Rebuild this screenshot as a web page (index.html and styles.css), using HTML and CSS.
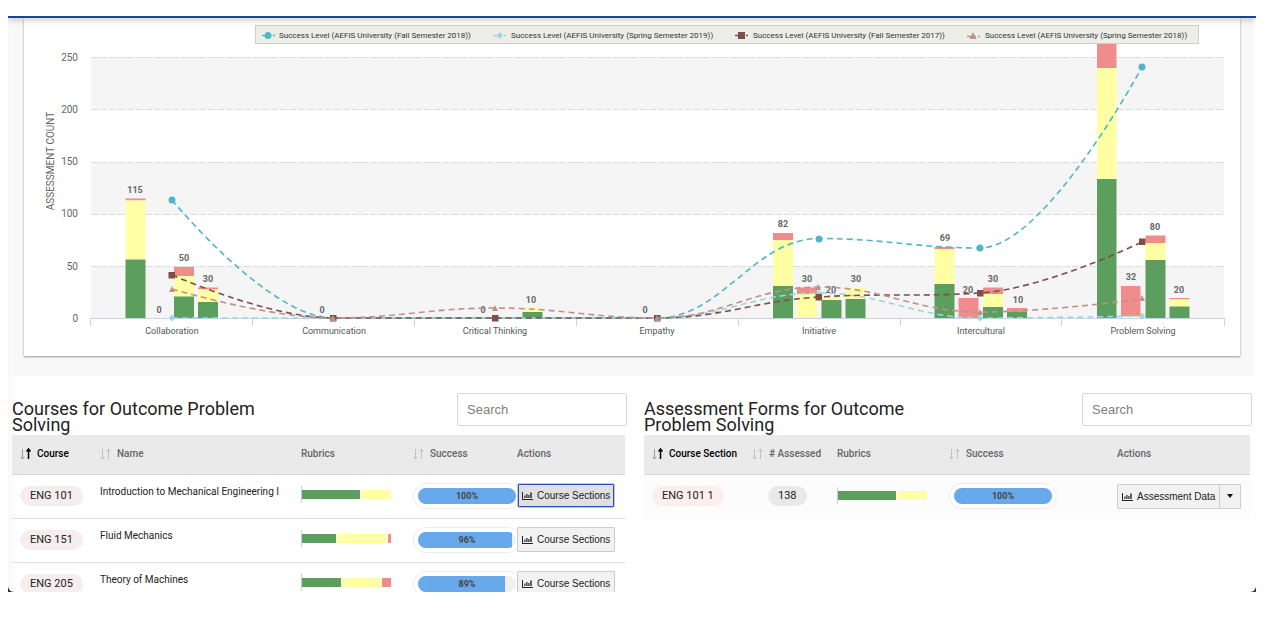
FILE: index.html
```html
<!DOCTYPE html>
<html lang="en">
<head>
    <meta charset="UTF-8">
    <meta name="viewport" content="width=device-width, initial-scale=1.0">
    <title>Outcome Assessment</title>
    <link rel="stylesheet" href="styles.css">
</head>
<body>
    <!-- shared icons -->
    <svg class="icon-defs" aria-hidden="true">
        <symbol id="icon-sort" viewBox="0 0 12 12">
            <path class="arrow-down" d="M2.500 1v10M0.500 9l2 2 2-2"/>
            <path class="arrow-up" d="M8.500 11V1M6.500 3.500l2-2.500 2 2.500"/>
        </symbol>
        <symbol id="icon-chart" viewBox="0 0 11 9">
            <path d="M0 1h1v7h10v1H0zM2.300 4.500h1.200v2.500H2.300zM4.300 3h1.200v4H4.300zM6.300 4h1.200v3H6.300zM8.300 1.500h1.400v5.500H8.300z"/>
        </symbol>
    </svg>

    <div class="frame">
        <div class="top-line"></div>
        <main class="content">
            <section class="chart-panel">
                <div class="chart-card">
                    <svg class="chart" viewBox="24 18 1216 338" role="img" aria-label="Assessment count by outcome">
                        <g class="bands">
                            <rect x="91" y="57" width="1133" height="52"/>
                            <rect x="91" y="162" width="1133" height="52"/>
                            <rect x="91" y="266" width="1133" height="52"/>
                        </g>
                        <path class="grid" d="M91 57.500H1224M91 109.500H1224M91 162.500H1224M91 214.500H1224M91 266.500H1224"/>

                        <g class="y-labels">
                            <text x="78" y="61">250</text>
                            <text x="78" y="113">200</text>
                            <text x="78" y="165">150</text>
                            <text x="78" y="217">100</text>
                            <text x="78" y="270">50</text>
                            <text x="78" y="322">0</text>
                        </g>
                        <text class="axis-title" transform="translate(54 161) rotate(-90)">ASSESSMENT COUNT</text>

                        <path class="axis" d="M91 318.500H1224M90.500 318v8M252.500 318v8M414.500 318v8M576.500 318v8M738.500 318v8M900.500 318v8M1061.500 318v8M1224.500 318v8"/>
                        <g class="x-labels">
                            <text x="172" y="334">Collaboration</text>
                            <text x="334" y="334">Communication</text>
                            <text x="495" y="334">Critical Thinking</text>
                            <text x="657" y="334">Empathy</text>
                            <text x="819" y="334">Initiative</text>
                            <text x="981" y="334">Intercultural</text>
                            <text x="1143" y="334">Problem Solving</text>
                        </g>

                        <!-- stacked bars -->
                        <path class="bar-red" d="M125.500 198.500h20v2h-20zM174 267h20v9h-20zM198 287.500h20v2h-20zM773 233h20v7h-20zM797 287.500h20v6.500h-20zM934.500 247h20v2h-20zM958.500 298h20v20h-20zM983 287.500h20v6.500h-20zM1007 308h20v4h-20zM1097 40h19.500v28h-19.500zM1121 286h19.500v30.500h-19.500zM1145.500 235.500h20v7.500h-20zM1169.500 298h20v1.500h-20z"/>
                        <path class="bar-yellow" d="M125.500 200.500h20v59h-20zM174 276h20v20.500h-20zM198 289.500h20v12.500h-20zM522.500 308h20v4h-20zM773 240h20v46h-20zM797 294h20v24h-20zM821.500 298h20v2h-20zM845.500 288h20v11h-20zM934.500 249h20v35h-20zM983 294h20v13h-20zM1097 68h19.500v111h-19.500zM1121 316.500h19.500v1.500h-19.500zM1145.500 243h20v17h-20zM1169.500 299.500h20v7h-20z"/>
                        <path class="bar-green" d="M125.500 259.500h20v58.500h-20zM174 296.500h20v21.500h-20zM198 302h20v16h-20zM522.500 312h20v6h-20zM773 286h20v32h-20zM821.500 300h20v18h-20zM845.500 299h20v19h-20zM934.500 284h20v34h-20zM983 307h20v11h-20zM1007 312h20v6h-20zM1097 179h19.500v139h-19.500zM1145.500 260h20v58h-20zM1169.500 306.500h20v11.500h-20z"/>

                        <g class="bar-labels">
                            <text x="135" y="193">115</text>
                            <text x="159" y="313">0</text>
                            <text x="184" y="261">50</text>
                            <text x="208" y="282">30</text>
                            <text x="322" y="313">0</text>
                            <text x="483" y="313">0</text>
                            <text x="531" y="303">10</text>
                            <text x="645" y="313">0</text>
                            <text x="783" y="227">82</text>
                            <text x="807" y="282">30</text>
                            <text x="831" y="293">20</text>
                            <text x="856" y="282">30</text>
                            <text x="945" y="241">69</text>
                            <text x="968" y="293">20</text>
                            <text x="993" y="282">30</text>
                            <text x="1018" y="303">10</text>
                            <text x="1131" y="280">32</text>
                            <text x="1155" y="230">80</text>
                            <text x="1179" y="293">20</text>
                        </g>

                        <!-- success level lines -->
                        <g class="line fall-2018">
                            <path d="M172 200C172 200 269 318 333 318C398 318 431 318 495 318C560 318 592 318 657 318C722 318 754 238.500 819 238.500C883 238.500 916 248 980 248C1045 248 1142 67 1142 67"/>
                            <circle cx="172" cy="200" r="3.500"/><circle cx="819" cy="239" r="3.500"/><circle cx="980" cy="248" r="3.500"/><circle cx="1142" cy="67" r="3.500"/>
                        </g>
                        <g class="line spring-2019">
                            <path d="M172 318H657C722 318 754 293 819 293C883 293 916 318 980 318C1045 318 1142 316 1142 316"/>
                            <path class="mark" d="M172 314.500l3 3.500-3 3.500-3-3.500zM819 290l3 3.500-3 3.500-3-3.500zM980 314.500l3 3.500-3 3.500-3-3.500zM1142 312.500l3 3.500-3 3.500-3-3.500z"/>
                        </g>
                        <g class="line fall-2017">
                            <path d="M172 275C172 275 269 318 333 318H657C722 318 754 301 819 297C883 293 916 297 980 293C1045 289 1142 242 1142 242"/>
                            <path class="mark" d="M168.500 272h6.500v6.500h-6.500zM330 315h6.500v6.500H330zM492 315h6.500v6.500H492zM654 315h6.500v6.500H654zM815.500 294h6.500v6.500h-6.500zM977 290h6.500v6.500H977zM1139 238.500h6.500v6.500h-6.500z"/>
                        </g>
                        <g class="line spring-2018">
                            <path d="M172 289C172 289 269 318 333 318C398 318 431 308 495 308C560 308 592 318 657 318C722 318 754 287 819 287C883 287 916 312 980 312C1045 312 1142 299 1142 299"/>
                            <path class="mark" d="M172 286l3 6h-6zM333 315l3 6h-6zM495 305l3 6h-6zM657 315l3 6h-6zM818 284l3 6h-6zM980 309l3 6h-6zM1142 295l3 6h-6z"/>
                        </g>

                        <!-- legend -->
                        <rect class="legend-box" x="255.500" y="25.500" width="943" height="18"/>
                        <g class="legend-marks">
                            <g class="line fall-2018"><path d="M262 35.500h13"/><circle cx="268" cy="35.500" r="3.500"/></g>
                            <g class="line spring-2019"><path d="M493 35.500h13"/><path class="mark" d="M500 32l3 3.500-3 3.500-3-3.500z"/></g>
                            <g class="line fall-2017"><path d="M735 35.500h13"/><path class="mark" d="M738 32h7v7h-7z"/></g>
                            <g class="line spring-2018"><path d="M967 36.500h13"/><path class="mark" d="M973 32l3.500 7h-7z"/></g>
                        </g>
                        <g class="legend-text">
                            <text x="279" y="38">Success Level (AEFIS University (Fall Semester 2018))</text>
                            <text x="511" y="38">Success Level (AEFIS University (Spring Semester 2019))</text>
                            <text x="753" y="38">Success Level (AEFIS University (Fall Semester 2017))</text>
                            <text x="985" y="38">Success Level (AEFIS University (Spring Semester 2018))</text>
                        </g>
                    </svg>
                </div>
            </section>

            <div class="tables">
                <section class="table-panel">
                    <div class="panel-head">
                        <h2>Courses for Outcome Problem Solving</h2>
                        <input type="search" class="search" placeholder="Search" aria-label="Search courses">
                    </div>
                    <table class="courses">
                        <thead>
                            <tr>
                                <th class="col-course sorted"><svg class="sort"><use href="#icon-sort"/></svg>Course</th>
                                <th><svg class="sort"><use href="#icon-sort"/></svg>Name</th>
                                <th class="col-rubrics">Rubrics</th>
                                <th class="col-success"><svg class="sort"><use href="#icon-sort"/></svg>Success</th>
                                <th class="col-actions">Actions</th>
                            </tr>
                        </thead>
                        <tbody>
                            <tr>
                                <td><span class="tag">ENG 101</span></td>
                                <td class="name">Introduction to Mechanical Engineering I</td>
                                <td><div class="rubric"><i class="green" style="width: 66%"></i><i class="yellow" style="width: 34%"></i></div></td>
                                <td><div class="progress"><div class="track"><div class="fill" style="width: 100%"></div><span>100%</span></div></div></td>
                                <td><button type="button" class="btn active"><svg class="icon"><use href="#icon-chart"/></svg>Course Sections</button></td>
                            </tr>
                            <tr>
                                <td><span class="tag">ENG 151</span></td>
                                <td class="name">Fluid Mechanics</td>
                                <td><div class="rubric"><i class="green" style="width: 39%"></i><i class="yellow" style="width: 57%"></i><i class="red" style="width: 4%"></i></div></td>
                                <td><div class="progress"><div class="track"><div class="fill" style="width: 96%"></div><span>96%</span></div></div></td>
                                <td><button type="button" class="btn"><svg class="icon"><use href="#icon-chart"/></svg>Course Sections</button></td>
                            </tr>
                            <tr>
                                <td><span class="tag">ENG 205</span></td>
                                <td class="name">Theory of Machines</td>
                                <td><div class="rubric"><i class="green" style="width: 44%"></i><i class="yellow" style="width: 45%"></i><i class="red" style="width: 11%"></i></div></td>
                                <td><div class="progress"><div class="track"><div class="fill" style="width: 89%"></div><span>89%</span></div></div></td>
                                <td><button type="button" class="btn"><svg class="icon"><use href="#icon-chart"/></svg>Course Sections</button></td>
                            </tr>
                        </tbody>
                    </table>
                </section>

                <section class="table-panel">
                    <div class="panel-head">
                        <h2>Assessment Forms for Outcome Problem Solving</h2>
                        <input type="search" class="search" placeholder="Search" aria-label="Search assessment forms">
                    </div>
                    <table class="forms">
                        <thead>
                            <tr>
                                <th class="col-section sorted"><svg class="sort"><use href="#icon-sort"/></svg>Course Section</th>
                                <th class="col-assessed"><svg class="sort"><use href="#icon-sort"/></svg># Assessed</th>
                                <th class="col-rubrics">Rubrics</th>
                                <th><svg class="sort"><use href="#icon-sort"/></svg>Success</th>
                                <th class="col-data">Actions</th>
                            </tr>
                        </thead>
                        <tbody>
                            <tr>
                                <td><span class="tag rose">ENG 101 1</span></td>
                                <td class="count"><span class="tag gray">138</span></td>
                                <td><div class="rubric"><i class="green" style="width: 66%"></i><i class="yellow" style="width: 34%"></i></div></td>
                                <td><div class="progress"><div class="track"><div class="fill" style="width: 100%"></div><span>100%</span></div></div></td>
                                <td>
                                    <div class="btn-group">
                                        <button type="button" class="btn"><svg class="icon"><use href="#icon-chart"/></svg>Assessment Data</button>
                                        <button type="button" class="btn caret" aria-label="More actions"></button>
                                    </div>
                                </td>
                            </tr>
                        </tbody>
                    </table>
                </section>
            </div>
        </main>
    </div>
</body>
</html>
```
FILE: styles.css
```css
* {
    box-sizing: border-box;
}
body {
    margin: 0;
    padding: 16px 10px 36px 8px;
    background: #fff;
    font-family: Roboto, Arial, sans-serif;
    color: #222;
}
.icon-defs {
    position: absolute;
    width: 0;
    height: 0;
}
.frame {
    height: calc(100vh - 52px);
    display: flex;
    flex-direction: column;
    overflow: hidden;
    background: linear-gradient(90deg, #1d2f4d, #5a2340);
}
.top-line {
    flex: none;
    height: 2px;
    background: #1f429c;
    box-shadow: 0 1px 6px rgba(0, 0, 0, 0.5);
    position: relative;
    z-index: 2;
}
.content {
    flex: 1;
    min-height: 0;
    overflow: hidden;
    padding: 0 3px 0 4px;
    border-radius: 0 0 6px 6px;
    background: linear-gradient(90deg, #f9f9f9, #fff 12px);
}

/* chart */
.chart-panel {
    padding: 0 13px 20px 12px;
    background: #f8f8f8;
}
.chart-card {
    background: #fff;
    box-shadow: 0 1px 2px rgba(0, 0, 0, 0.4);
}
.chart {
    display: block;
    width: 100%;
    height: auto;
    fill: #666;
}
.bands {
    fill: #f5f5f5;
}
.grid {
    stroke: #dcdcdc;
    stroke-dasharray: 7 2;
}
.axis {
    fill: none;
    stroke: #c8d4e0;
}
.y-labels {
    font-size: 10px;
    text-anchor: end;
}
.axis-title {
    font-size: 10px;
    text-anchor: middle;
}
.x-labels {
    font-size: 9px;
    text-anchor: middle;
    fill: #555;
}
.bar-labels {
    font-size: 9px;
    font-weight: bold;
    text-anchor: middle;
}
.bar-red { fill: #f08c8c; }
.bar-yellow { fill: #ffffa3; }
.bar-green { fill: #5b9e5d; }

.line path:first-child {
    fill: none;
    stroke-width: 1.6px;
    stroke-dasharray: 6 4;
}
.fall-2018 { stroke: #4fb6c8; fill: #4fb6c8; }
.spring-2019 { stroke: #9bd6e2; fill: #9bd6e2; }
.fall-2017 { stroke: #7f4e44; fill: #7f4e44; }
.spring-2018 { stroke: #bd928a; fill: #bd928a; }
.line circle,
.line .mark {
    stroke: none;
}
.legend-box {
    fill: #edeee7;
    stroke: #cfcfca;
}
.legend-marks .line path:first-child {
    stroke-dasharray: 9 2;
}
.legend-text {
    font-size: 8px;
    fill: #333;
}

/* tables */
.tables {
    display: grid;
    grid-template-columns: minmax(0, 613fr) minmax(0, 606fr);
    gap: 19px;
    padding: 17px 3px 0 0;
}
.panel-head {
    display: flex;
    justify-content: space-between;
    align-items: flex-start;
    height: 42px;
    margin-right: -2px;
}
h2 {
    max-width: 270px;
    margin: 0;
    padding-top: 8px;
    font-size: 18px;
    font-weight: normal;
    line-height: 16px;
}
.search {
    width: 170px;
    height: 33px;
    padding: 0 9px;
    border: 1px solid #d3d9de;
    border-radius: 2px;
    background: #fff;
    font-family: "Liberation Sans", Arial, sans-serif;
    font-size: 13px;
}
.search::placeholder {
    color: #808080;
}
table {
    width: 100%;
    table-layout: fixed;
    border-collapse: separate;
    border-spacing: 0;
    position: relative;
}
th {
    height: 40px;
    padding: 0 0 2px 8px;
    border-bottom: 1px solid #d8d8d8;
    background: #eaeaea;
    color: #666;
    font-size: 10px;
    font-weight: 500;
    line-height: 12px;
    text-align: left;
    white-space: nowrap;
}
th.sorted {
    color: #000;
}
.col-course { width: 80px; }
.col-rubrics { width: 112px; }
.col-success { width: 104px; }
.col-actions { width: 116px; }
.col-section { width: 100px; }
.col-assessed { width: 85px; }
.col-data { width: 141px; }
.sort {
    --up: #c0c0c0;
    width: 12px;
    height: 12px;
    margin-right: 5px;
    vertical-align: top;
    fill: none;
    stroke: #c0c0c0;
}
.sorted .sort {
    --up: #000;
    stroke: #999;
}
.arrow-up {
    stroke: var(--up);
}
.sorted .sort {
    --up-width: 1.5px;
}
.arrow-up {
    stroke-width: var(--up-width, 1px);
}
td {
    height: 44px;
    padding: 0 0 2px 8px;
    border-bottom: 1px solid #ddd;
    white-space: nowrap;
}
td.name {
    padding-top: 11px;
    vertical-align: top;
    font-size: 10px;
    line-height: 12px;
}
td.count {
    padding-left: 24px;
}
.forms td {
    border-bottom: 0;
    background: #fcfcfc;
}
.tag {
    display: inline-block;
    padding: 0 10px;
    border-radius: 10px;
    background: #f6eeee;
    font-size: 11px;
    line-height: 20px;
    vertical-align: middle;
}
.tag.rose { background: #fcefed; }
.tag.gray { background: #e9e9e9; }

.rubric {
    display: flex;
    width: 91px;
    height: 17px;
    margin-bottom: 2px;
    padding: 4px 0;
    border-left: 1px solid #c3cfd9;
}
.rubric i {
    border-right: 1px solid #fff;
}
.green { background: #5b9e5d; }
.yellow { background: #ffffa3; }
.red { background: #f08c8c; }

.progress {
    width: 108px;
    height: 26px;
    padding: 4px;
    border: 1px solid #ececec;
    border-radius: 13px;
    background: #fff;
}
.track {
    display: grid;
    height: 16px;
    overflow: hidden;
    border-radius: 8px;
    background: #f1f1f1;
}
.track > * {
    grid-area: 1 / 1;
}
.track span {
    font-size: 9px;
    font-weight: bold;
    line-height: 17px;
    text-align: center;
    color: #444;
}
.fill {
    background: #67a9ea;
}

.btn {
    display: inline-flex;
    align-items: center;
    gap: 4px;
    height: 25px;
    padding: 0 4px;
    border: 1px solid #ccc;
    border-radius: 1px;
    background: #f2f2f2;
    color: #222;
    font-family: "Liberation Sans", Arial, sans-serif;
    font-size: 10px;
    vertical-align: middle;
    position: relative;
}
.btn.active {
    border-color: #c8c8c8;
    border-radius: 2px;
    background: #e0e0e0;
    box-shadow: inset 0 0 0 1px #2c4fb5;
}
.icon {
    width: 11px;
    height: 9px;
    fill: #222;
}
.btn-group {
    display: flex;
}
.caret {
    width: 22px;
    margin-left: -1px;
    justify-content: center;
}
.caret::before {
    content: "";
    border: 3px solid transparent;
    border-top: 4px solid #111;
    border-bottom: 0;
}
```
